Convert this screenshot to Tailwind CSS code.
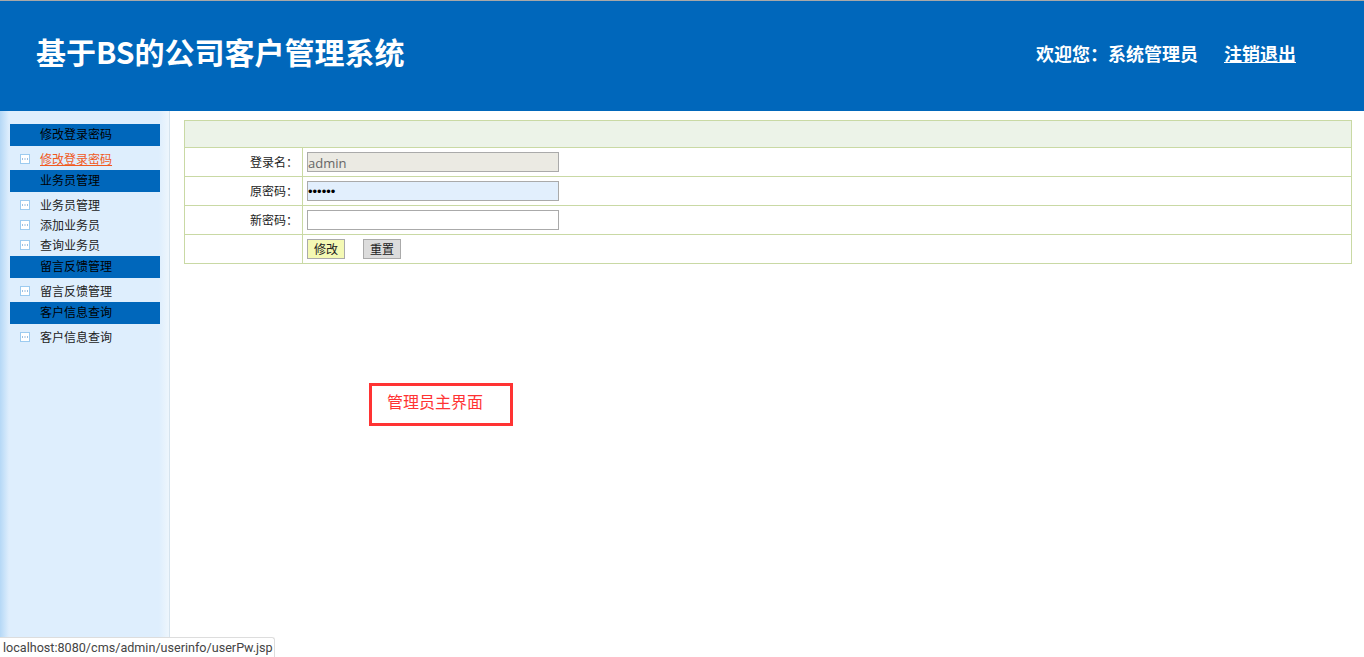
<!DOCTYPE html>
<html lang="zh-CN">
<head>
    <meta charset="UTF-8">
    <meta name="viewport" content="width=device-width, initial-scale=1.0">
    <title>基于BS的公司客户管理系统</title>
    <script src="https://cdn.jsdelivr.net/npm/@tailwindcss/browser@4"></script>
</head>
<body class="relative h-[657px] overflow-hidden bg-white font-['Noto_Sans_CJK_SC','Liberation_Sans',sans-serif] text-xs text-[#222]">
    <!-- header -->
    <header class="h-[111px] border-t border-[#a8a8a8] bg-[#0067bb] text-white flex items-center justify-between pl-9 pr-[68px] pb-[10px]">
        <h1 class="text-[30px] font-bold leading-none">基于BS的公司客户管理系统</h1>
        <div class="flex gap-[26px] mt-[4px] text-lg font-bold leading-none">
            <span>欢迎您：系统管理员</span>
            <a href="#" class="underline">注销退出</a>
        </div>
    </header>

    <div class="flex h-[546px]">
        <!-- left menu -->
        <aside class="w-[170px] shrink-0 border-r border-[#d5e3ee] bg-[linear-gradient(to_right,#b5d8f6_0px,#deeefd_9px,#deeefd_159px,#eef6fd_169px)] pt-[13px] pl-[10px]">
            <div class="w-[150px] h-[22px] bg-[#0067bb] pl-[30px] leading-[20px] text-black">修改登录密码</div>
            <ul class="pt-[3px] pb-[1px]">
                <li class="h-5 flex items-center gap-[10px] pl-[10px] text-[#f05a1e] underline">
                    <svg width="10" height="10" viewBox="0 0 10 10"><rect x="0.5" y="0.5" width="9" height="9" fill="#fff" stroke="#9ccbf0"/><path d="M2 5h1M4.5 5h1M7 5h1" stroke="#3a7fc0"/></svg>
                    <a href="#">修改登录密码</a>
                </li>
            </ul>
            <div class="w-[150px] h-[22px] bg-[#0067bb] pl-[30px] leading-[20px] text-black">业务员管理</div>
            <ul class="pt-[3px] pb-[1px]">
                <li class="h-5 flex items-center gap-[10px] pl-[10px]">
                    <svg width="10" height="10" viewBox="0 0 10 10"><rect x="0.5" y="0.5" width="9" height="9" fill="#fff" stroke="#9ccbf0"/><path d="M2 5h1M4.5 5h1M7 5h1" stroke="#3a7fc0"/></svg>
                    <a href="#">业务员管理</a>
                </li>
                <li class="h-5 flex items-center gap-[10px] pl-[10px]">
                    <svg width="10" height="10" viewBox="0 0 10 10"><rect x="0.5" y="0.5" width="9" height="9" fill="#fff" stroke="#9ccbf0"/><path d="M2 5h1M4.5 5h1M7 5h1" stroke="#3a7fc0"/></svg>
                    <a href="#">添加业务员</a>
                </li>
                <li class="h-5 flex items-center gap-[10px] pl-[10px]">
                    <svg width="10" height="10" viewBox="0 0 10 10"><rect x="0.5" y="0.5" width="9" height="9" fill="#fff" stroke="#9ccbf0"/><path d="M2 5h1M4.5 5h1M7 5h1" stroke="#3a7fc0"/></svg>
                    <a href="#">查询业务员</a>
                </li>
            </ul>
            <div class="w-[150px] h-[22px] bg-[#0067bb] pl-[30px] leading-[20px] text-black">留言反馈管理</div>
            <ul class="pt-[3px] pb-[1px]">
                <li class="h-5 flex items-center gap-[10px] pl-[10px]">
                    <svg width="10" height="10" viewBox="0 0 10 10"><rect x="0.5" y="0.5" width="9" height="9" fill="#fff" stroke="#9ccbf0"/><path d="M2 5h1M4.5 5h1M7 5h1" stroke="#3a7fc0"/></svg>
                    <a href="#">留言反馈管理</a>
                </li>
            </ul>
            <div class="w-[150px] h-[22px] bg-[#0067bb] pl-[30px] leading-[20px] text-black">客户信息查询</div>
            <ul class="pt-[3px] pb-[1px]">
                <li class="h-5 flex items-center gap-[10px] pl-[10px]">
                    <svg width="10" height="10" viewBox="0 0 10 10"><rect x="0.5" y="0.5" width="9" height="9" fill="#fff" stroke="#9ccbf0"/><path d="M2 5h1M4.5 5h1M7 5h1" stroke="#3a7fc0"/></svg>
                    <a href="#">客户信息查询</a>
                </li>
            </ul>
        </aside>

        <!-- password form -->
        <main class="flex-1 pt-[9px] pl-[14px]">
            <table class="w-[1168px] table-fixed border-collapse">
                <colgroup>
                    <col class="w-[118px]">
                    <col>
                </colgroup>
                <tbody>
                    <tr class="h-[27px] bg-[#ecf3e8]">
                        <td colspan="2" class="border border-[#c9d9a4] p-0"></td>
                    </tr>
                    <tr class="h-[29px]">
                        <td class="border border-[#c9d9a4] p-0 pr-[4px] text-right">登录名：</td>
                        <td class="border border-[#c9d9a4] p-0 pl-[4px]">
                            <input type="text" value="admin" disabled class="block w-[252px] h-5 border border-[#aaa] bg-[#ebeae3] text-[#666] text-[13px] leading-none px-0 pt-px font-['Open_Sans','Noto_Sans_CJK_SC',sans-serif]">
                        </td>
                    </tr>
                    <tr class="h-[29px]">
                        <td class="border border-[#c9d9a4] p-0 pr-[4px] text-right">原密码：</td>
                        <td class="border border-[#c9d9a4] p-0 pl-[4px]">
                            <input type="password" value="123456" class="block w-[252px] h-5 border border-[#aaa] bg-[#e2effd] text-black text-[13px] leading-none px-0 font-['Liberation_Sans',sans-serif]">
                        </td>
                    </tr>
                    <tr class="h-[29px]">
                        <td class="border border-[#c9d9a4] p-0 pr-[4px] text-right">新密码：</td>
                        <td class="border border-[#c9d9a4] p-0 pl-[4px]">
                            <input type="password" class="block w-[252px] h-5 border border-[#aaa] bg-white text-[13px] px-0 font-['Liberation_Sans',sans-serif]">
                        </td>
                    </tr>
                    <tr class="h-[29px]">
                        <td class="border border-[#c9d9a4] p-0"></td>
                        <td class="border border-[#c9d9a4] p-0 pl-[4px]">
                            <div class="flex gap-[18px]">
                                <button type="button" class="w-[38px] h-5 border border-[#aaa] bg-[#f4f9b4] text-xs leading-none">修改</button>
                                <button type="reset" class="w-[38px] h-5 border border-[#aaa] bg-[#dcdcdc] text-xs leading-none">重置</button>
                            </div>
                        </td>
                    </tr>
                </tbody>
            </table>
        </main>
    </div>

    <!-- annotation over the page -->
    <div class="absolute left-[369px] top-[383px] w-[144px] h-[43px] border-[3px] border-[#f33] pl-[15px] text-base leading-[31px] text-[#f33]">管理员主界面</div>

    <!-- browser status bubble -->
    <div class="absolute left-0 bottom-0 h-5 w-[275px] bg-white border-t border-r border-[#ddd] rounded-tr-[3px] pl-[3px] text-[12.6px] leading-[20px] text-[#444] font-['Roboto',sans-serif] whitespace-nowrap">localhost:8080/cms/admin/userinfo/userPw.jsp</div>
</body>
</html>
